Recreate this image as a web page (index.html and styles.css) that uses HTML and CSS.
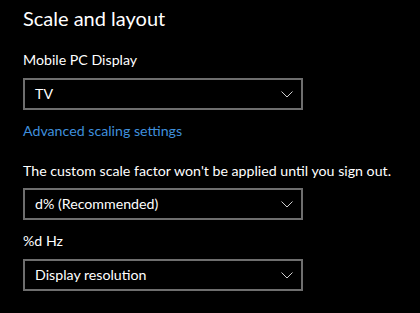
FILE: index.html
```html
<!DOCTYPE html>
<html>
<head>
<meta charset="utf-8">
<link rel="stylesheet" href="styles.css">
</head>
<body>
<div class="page">
  <h1 class="title">Scale and layout</h1>
  <div class="label first">Mobile PC Display</div>
  <div class="combo gap8">
    <span class="value">TV</span>
    <svg class="chev" width="12" height="7" viewBox="0 0 12 7"><path d="M0.5 0.5 L6 6 L11.5 0.5" fill="none" stroke="#cfcfcf" stroke-width="1"/></svg>
  </div>
  <a class="link">Advanced scaling settings</a>
  <div class="label msg">The custom scale factor won't be applied until you sign out.</div>
  <div class="combo gap7">
    <span class="value">d% (Recommended)</span>
    <svg class="chev" width="12" height="7" viewBox="0 0 12 7"><path d="M0.5 0.5 L6 6 L11.5 0.5" fill="none" stroke="#cfcfcf" stroke-width="1"/></svg>
  </div>
  <div class="label hz">%d Hz</div>
  <div class="combo gap8">
    <span class="value">Display resolution</span>
    <svg class="chev" width="12" height="7" viewBox="0 0 12 7"><path d="M0.5 0.5 L6 6 L11.5 0.5" fill="none" stroke="#cfcfcf" stroke-width="1"/></svg>
  </div>
</div>
</body>
</html>
```
FILE: styles.css
```css
html, body {
  margin: 0;
  padding: 0;
  background: #000;
}
.page {
  padding: 4px 0 0 23px;
  font-family: Lato, "Noto Sans", sans-serif;
  color: #fff;
  font-size: 14.2px;
  line-height: 20px;
}
.title {
  margin: 0;
  font-size: 20px;
  line-height: 28px;
  font-weight: 400;
}
.label {
  display: block;
  white-space: nowrap;
}
.first { margin-top: 18px; }
.msg { margin-top: 20px; }
.hz { margin-top: 11px; }
.link {
  display: block;
  margin-top: 11px;
  color: #3f8fdc;
}
.combo {
  box-sizing: border-box;
  width: 280px;
  height: 32px;
  border: 2px solid #6e6e6e;
  display: flex;
  align-items: center;
  justify-content: space-between;
  padding: 0 8px 0 10px;
}
.gap8 { margin-top: 8px; }
.gap7 { margin-top: 7px; }
.value {
  line-height: 28px;
}
.chev {
  display: block;
}
```
